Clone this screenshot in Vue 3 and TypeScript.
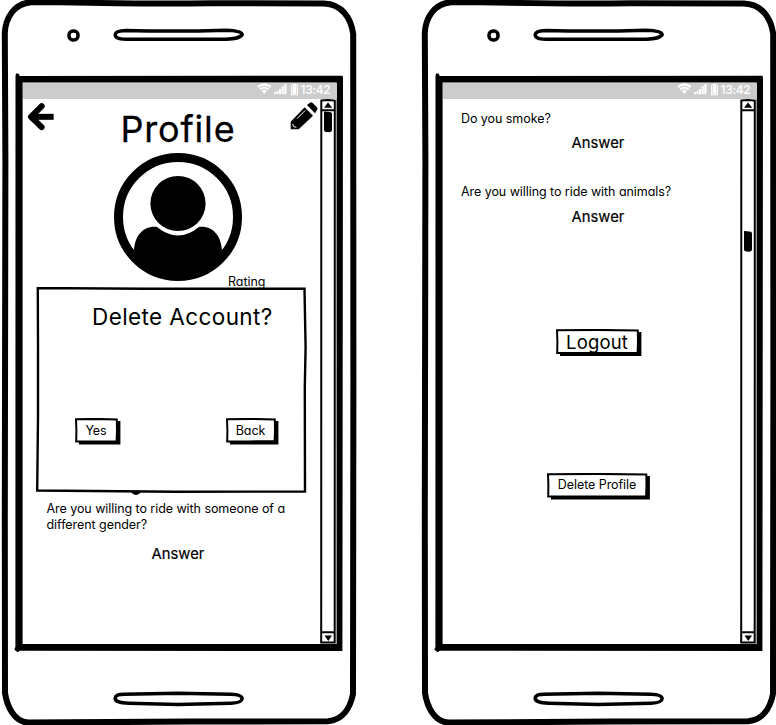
<script setup lang="ts">
interface Phone {
  id: 'dialog' | 'settings'
  thumb: number
}

interface Answered {
  question: string
  answer: string
}

const phones: Phone[] = [
  { id: 'dialog', thumb: 12.5 },
  { id: 'settings', thumb: 132 },
]

const answers: Answered[] = [
  { question: 'Do you smoke?', answer: 'Answer' },
  { question: 'Are you willing to ride with animals?', answer: 'Answer' },
]

// Slightly uneven, hand-drawn outline of a w x h box.
function sketch(w: number, h: number): string {
  return `M1 1.2 L${w * 0.5} 0.9 L${w - 1.2} 1.4 L${w - 1} ${h * 0.5} L${w - 1.4} ${h - 1.3} L${w * 0.45} ${h - 1.1} L1.2 ${h - 1} L1.4 ${h * 0.5} Z`
}

function shadow(w: number, h: number): string {
  return `M4 3 H${w + 2.4} V${h + 2} H4 Z`
}

const buttons = {
  yes: { label: 'Yes', w: 43, h: 24.5, cls: 'yes' },
  back: { label: 'Back', w: 50, h: 24.5, cls: 'back' },
  logout: { label: 'Logout', w: 83, h: 25, cls: 'logout' },
  remove: { label: 'Delete Profile', w: 100.5, h: 24.5, cls: 'remove' },
}
const dialogButtons = [buttons.yes, buttons.back]
const pageButtons = [buttons.logout, buttons.remove]
</script>

<template>
  <main class="board">
    <section v-for="phone in phones" :key="phone.id" class="phone">
      <svg class="frame" viewBox="0 0 360 725" width="360" height="725">
        <path class="shell" d="M31 2.2 L60 2.2 Q150 4.3 210 3.3 L324 3.4 C342 4 351 18 353.2 34 L353.4 380 L353 694 C350 709 342 720 328 721.2 L190 721.6 L28 722.6 C14 722 7 706 5 693 L4.8 520 L5.4 160 L4.8 33 C5.5 18 14 3.5 31 2.2 Z" />
        <rect class="camera" x="69" y="31" width="9" height="9" rx="4" />
        <path class="slot" d="M126 30.6 Q178 31.8 226 30.2 C237 30.6 242 32 242.2 34.5 C241 37.5 233 39 226 39.2 H126 C117 39 115 37 115.2 34.5 C115.5 32 119 30.8 126 30.6 Z" />
        <path class="slot" d="M124 694.2 L178 693.3 L231 694.2 C239 694.5 242 696 242.2 698.5 C242 702 237 703 231 703.2 L178 704.6 L129 703.2 C119 703 115 701 115.2 698 C115.5 695 118 694.3 124 694.2 Z" />
        <path class="bezel" d="M15.5 76 L16 73.5 L19 73.8 L19.5 76 L342.5 75.700 L343 78 L342.4 651 L20 650.7 L17.5 652.2 L14.3 649.5 L15.4 647 Z M22.6 82.6 V644 H336.6 V82.6 Z" fill-rule="evenodd" />
      </svg>

      <div class="screen">
        <header class="status">
          <svg viewBox="168 248 126 40" width="42" height="13.3">
            <path d="M169 257 Q190 241 211 257 L207 263 Q190 250 173 263 Z M175 265 Q190 253 205 265 L201 270 Q190 261 179 270 Z M182 272 Q190 265 198 272 L190 281 Z" />
            <path d="M219 276 h6 v6 h-6 Z M226.500 272 h6 v10 h-6 Z M234 266 h6 v16 h-6 Z M242 258 h6 v24 h-6 Z M250 251 h6.500 v31 h-6.500 Z" />
            <path fill-rule="evenodd" d="M270 253 h5 v-3 h11 v3 h5 v32 h-21 Z M273 256 v26 h15 v-26 Z M275 258 h11 v22 h-11 Z" />
          </svg>
          <span class="time">13:42</span>
        </header>

        <div class="body">
          <div class="page" :class="phone.id">
            <template v-if="phone.id === 'dialog'">
              <div class="top">
                <svg class="arrow" viewBox="81 306 81 87" width="27" height="29">
                  <path d="M97 350.500 H161" />
                  <path class="head" d="M125 318.500 L93 350.500 L125 381.500" />
                </svg>
                <h1>Profile</h1>
                <svg class="pencil" viewBox="269 303 84 88" width="28" height="29.300">
                  <path d="M271 388 V365 L313 322 L338 347 L295 388 Z M320 315 L329 308 Q333 305 337 309 L350 322 Q353 326 350 330 L344 340 Z" />
                  <path class="mark" d="M290 356 L314 332 M277 372 L280 380 L288 382" />
                </svg>
              </div>
              <svg class="avatar" viewBox="0 0 128 128" width="128" height="128">
                <circle cx="64" cy="64" r="59.500" />
                <circle class="solid" cx="64" cy="50.500" r="27.600" />
                <path class="solid" d="M20 97 C21 83 29 72.500 43 74 Q64 91 85 74 C99 72.500 107 83 108 97 C99 113 82 123 64 123 C46 123 29 113 20 97 Z" />
              </svg>
              <p class="rating">Rating</p>
              <i class="knob"></i>
              <p class="question">Are you willing to ride with someone of a<br>different gender?</p>
              <p class="answer">Answer</p>
            </template>

            <template v-else>
              <div v-for="item in answers" :key="item.question" class="item">
                <p class="question">{{ item.question }}</p>
                <p class="answer">{{ item.answer }}</p>
              </div>
              <button v-for="b in pageButtons" :key="b.label" :class="b.cls">
                <svg :width="b.w + 3" :height="b.h + 3">
                  <path class="cast" :d="shadow(b.w, b.h)" />
                  <path class="box" :d="sketch(b.w, b.h)" />
                </svg>
                <span>{{ b.label }}</span>
              </button>
            </template>
          </div>

          <svg class="scroll" viewBox="0 0 16 545" width="16" height="545">
            <path d="M1.300 1.600 L8 1 L14.800 1.600 L14.700 543.500 H1.200 Z M1 11.300 H15 M1 533.300 H15" />
            <path class="solid" d="M4 8.800 L8 3.500 L12.300 8.800 Z M4.500 536.500 H12 L8.300 542 Z" />
            <path class="solid" :transform="`translate(0 ${phone.thumb})`" d="M4 0.500 Q4 -0.300 5 0 L11 0.700 L12 2 V19 Q11 21 9 20.800 L5 20.300 Q4 20 4 18 Z" />
          </svg>
        </div>

        <div v-if="phone.id === 'dialog'" class="modal" role="dialog">
          <svg class="edge" width="271" height="206">
            <path d="M1.800 1 L110 1.800 L268.500 1.700 L269.600 60 L268.800 100 L269 204.500 L140 204.800 L1.200 203.500 L2 130 L2 60 Z" />
          </svg>
          <h2>Delete Account?</h2>
          <div class="actions">
            <button v-for="b in dialogButtons" :key="b.label" :class="b.cls">
              <svg :width="b.w + 3" :height="b.h + 3">
                <path class="cast" :d="shadow(b.w, b.h)" />
                <path class="box" :d="sketch(b.w, b.h)" />
              </svg>
              <span>{{ b.label }}</span>
            </button>
          </div>
        </div>
      </div>
    </section>
  </main>
</template>

<style>
body {
  background: #fff;
  overflow: hidden;
}
</style>

<style scoped>
.board {
  display: flex;
  gap: 60px;
  width: 776px;
  height: 725px;
  overflow: hidden;
  color: #000;
  font-family: Inter, "Noto Sans", sans-serif;
  font-feature-settings: "cv11", "ss03", "calt" 0;
  font-size: 12.5px;
  letter-spacing: -0.06px;
  line-height: 16px;
}
.phone {
  display: grid;
  flex: 0 0 360px;
  height: 725px;
}
.frame,
.screen {
  grid-area: 1 / 1;
}
svg {
  display: block;
}
.shell {
  fill: none;
  stroke: #000;
  stroke-width: 6;
}
.camera,
.slot {
  fill: none;
  stroke: #000;
  stroke-width: 3.5;
}
.screen {
  position: relative;
  width: 314px;
  height: 561px;
  margin: 83px 0 0 23px;
}
.status {
  display: flex;
  align-items: flex-start;
  justify-content: flex-end;
  height: 16px;
  padding-right: 6px;
  background: #ccc;
  color: #fff;
}
.status svg {
  fill: #fff;
  margin-right: 2px;
}
.time {
  width: 30.500px;
  font-size: 12px;
  font-weight: 500;
  letter-spacing: -0.3px;
  line-height: 14px;
  white-space: nowrap;
}
.body {
  display: flex;
}
.page {
  display: flex;
  flex-direction: column;
  align-items: center;
  width: 284px;
  height: 545px;
  padding-left: 13px;
}
.scroll {
  fill: none;
  stroke: #000;
  stroke-width: 2;
}
.solid {
  fill: #000;
  stroke: none;
}
h1,
h2,
p {
  margin: 0;
  font-weight: 400;
  white-space: nowrap;
}
.top {
  display: flex;
  justify-content: space-between;
  align-items: flex-start;
  align-self: stretch;
  height: 54px;
  margin-left: -9px;
  padding-right: 2px;
}
.arrow {
  margin-top: 3px;
  fill: none;
  stroke: #000;
  stroke-width: 18;
  stroke-linejoin: round;
}
.head {
  stroke-linecap: round;
}
.pencil {
  margin-top: 2px;
}
.mark {
  fill: none;
  stroke: #fff;
  stroke-width: 3;
}
h1 {
  padding: 9px 0 0 12px;
  font-size: 36px;
  letter-spacing: 0.8px;
  line-height: 42px;
  -webkit-text-stroke: 0.3px #000;
}
.avatar {
  flex: none;
  fill: none;
  stroke: #000;
  stroke-width: 9;
}
.rating {
  align-self: flex-start;
  margin: -7.5px 0 0 192px;
}
.knob {
  width: 10px;
  height: 10px;
  margin: 195.500px 84px 0 0;
  border-radius: 50%;
  background: #000;
}
.question {
  align-self: flex-start;
}
.dialog .question {
  margin: 6px 0 0 10.500px;
}
.answer {
  font-size: 14.800px;
  letter-spacing: 0;
  line-height: 18px;
  -webkit-text-stroke: 0.2px #000;
}
.dialog .answer {
  margin-top: 11.500px;
}
.settings {
  padding-top: 12px;
  height: 533px;
}
.item {
  display: flex;
  flex-direction: column;
  align-items: center;
  align-self: stretch;
  gap: 7px;
  margin-bottom: 32px;
}
.item + .item {
  gap: 8px;
}
.item .question {
  margin-left: 5px;
}
button {
  display: grid;
  padding: 0;
  border: 0;
  background: none;
  color: inherit;
  font: inherit;
  font-feature-settings: inherit;
  letter-spacing: inherit;
  line-height: 24px;
}
button svg,
button span {
  grid-area: 1 / 1;
}
button span {
  padding-right: 3px;
  text-align: center;
  white-space: nowrap;
}
.box {
  fill: #fff;
  stroke: #000;
  stroke-width: 2;
}
.logout {
  margin: 71px 0 115.500px 1px;
  font-size: 18.500px;
  letter-spacing: 0.15px;
  line-height: 26px;
}
.remove {
  margin-left: 1px;
}
.modal .actions span {
  line-height: 25.500px;
}
.modal {
  position: absolute;
  left: 13px;
  top: 204px;
  display: grid;
  width: 271px;
  height: 206px;
}
.edge {
  grid-area: 1 / 1;
  fill: #fff;
  stroke: #000;
  stroke-width: 2.400;
}
h2 {
  grid-area: 1 / 1;
  padding: 16px 0 0 56px;
  font-size: 22.500px;
  letter-spacing: 0.4px;
  line-height: 28px;
}
.actions {
  grid-area: 1 / 1;
  display: flex;
  align-self: start;
  gap: 105px;
  padding: 131px 0 0 38.500px;
}
</style>
